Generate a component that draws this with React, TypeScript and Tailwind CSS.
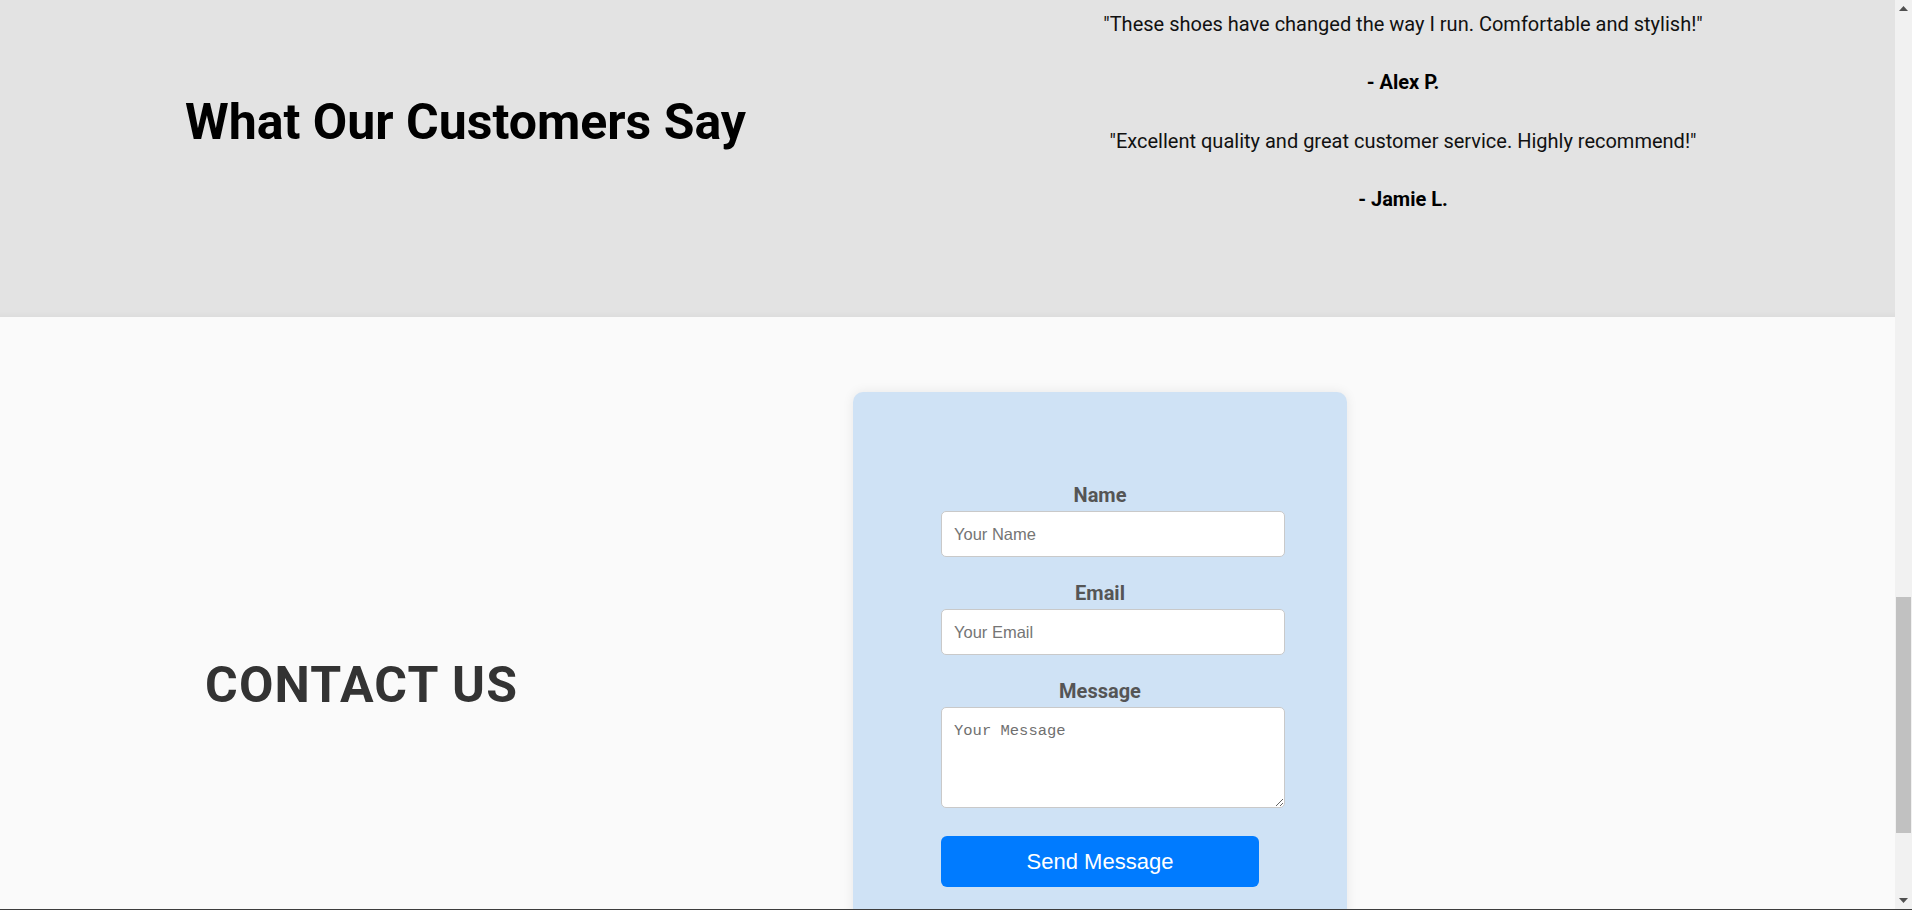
import React from "react";

function Field({ label, placeholder, id }: { label: string; placeholder: string; id: string }) {
  return (
    <div className="flex flex-col items-start mb-[24px]">
      <label htmlFor={id} className="block w-[318px] text-center font-bold text-[20px] leading-[24px] text-[#555555] mb-[4px]">
        {label}
      </label>
      <input
        id={id}
        type="text"
        placeholder={placeholder}
        className="box-border w-[344px] h-[46px] px-[12px] border border-[#c9c9c9] rounded-[5px] bg-white text-[16.5px] text-[#333] placeholder:text-[#757575] outline-none [font-family:'Liberation_Sans',Arial,sans-serif]"
      />
    </div>
  );
}

export default function App() {
  return (
    <div className="h-[910px] w-full overflow-hidden flex flex-col bg-[#fafafa] [font-family:Roboto,'Liberation_Sans',Arial,sans-serif]">
      <div className="flex flex-1 min-h-0">
        <main className="flex-1 min-w-0 flex flex-col overflow-hidden">
          {/* Testimonials */}
          <section className="h-[317px] shrink-0 bg-[#e3e3e3] flex items-start shadow-[inset_0_-10px_10px_-10px_rgba(0,0,0,0.06)]">
            <div className="w-[1023px] shrink-0 pl-[185px] pt-[92px]">
              <h2 className="text-[50px] leading-[60px] font-bold text-black whitespace-nowrap">What Our Customers Say</h2>
            </div>
            <div className="w-[760px] shrink-0 flex flex-col items-center text-center pt-[9.5px] gap-[30.5px] text-[20px] leading-[28px]">
              <p className="text-[#111111]">"These shoes have changed the way I run. Comfortable and stylish!"</p>
              <p className="font-bold text-black">- Alex P.</p>
              <p className="text-[#111111]">"Excellent quality and great customer service. Highly recommend!"</p>
              <p className="font-bold text-black">- Jamie L.</p>
            </div>
          </section>

          {/* Contact */}
          <section className="flex-1 min-h-0 bg-[#fafafa] flex items-start">
            <div className="w-[853px] shrink-0 pl-[205px] pt-[338px]">
              <h2 className="text-[50px] leading-[60px] font-bold text-[#333333] tracking-[1.2px] whitespace-nowrap">CONTACT US</h2>
            </div>
            <div className="mt-[75px] w-[494px] shrink-0 rounded-[10px] bg-[#cfe2f5] shadow-[0_0_12px_rgba(0,0,0,0.08)] pl-[88px] pr-[88px] pt-[91px] pb-[89px]">
              <form className="w-[318px] flex flex-col" onSubmit={(e) => e.preventDefault()}>
                <Field id="name" label="Name" placeholder="Your Name" />
                <Field id="email" label="Email" placeholder="Your Email" />
                <div className="flex flex-col items-start">
                  <label htmlFor="message" className="block w-[318px] text-center font-bold text-[20px] leading-[24px] text-[#555555] mb-[4px]">
                    Message
                  </label>
                  <textarea
                    id="message"
                    placeholder="Your Message"
                    className="box-border w-[344px] h-[101px] p-[12px] border border-[#c9c9c9] rounded-[5px] bg-white text-[15.5px] text-[#333] placeholder:text-[#6f6f6f] outline-none [font-family:'Liberation_Mono','DejaVu_Sans_Mono',monospace]"
                  />
                </div>
                <button
                  type="submit"
                  className="mt-[28px] w-[318px] h-[51px] rounded-[6px] bg-[#007bff] text-white text-[22px] [font-family:'Liberation_Sans',Arial,sans-serif]"
                >
                  Send Message
                </button>
              </form>
            </div>
          </section>
        </main>

        {/* Scrollbar */}
        <div className="w-[17px] shrink-0 bg-[#f1f1f1] flex flex-col">
          <div className="h-[17px] shrink-0 flex items-center justify-center">
            <svg width="9" height="5" viewBox="0 0 9 5">
              <polygon points="4.5,0 9,5 0,5" fill="#505050" />
            </svg>
          </div>
          <div className="flex-1 flex flex-col">
            <div className="h-[580px] shrink-0" />
            <div className="h-[236px] shrink-0 mx-[1px] bg-[#c1c1c1]" />
          </div>
          <div className="h-[17px] shrink-0 flex items-center justify-center">
            <svg width="9" height="5" viewBox="0 0 9 5">
              <polygon points="0,0 9,0 4.5,5" fill="#505050" />
            </svg>
          </div>
        </div>
      </div>
      <div className="h-px shrink-0 bg-[#3c3c3c]" />
    </div>
  );
}
